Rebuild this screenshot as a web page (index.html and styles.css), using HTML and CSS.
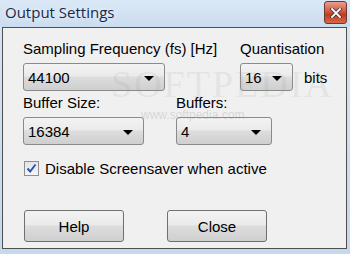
FILE: index.html
```html
<!DOCTYPE html>
<html>
  <head>
    <meta charset="UTF-8">
    <title>Output Settings</title>
    <link rel="stylesheet" href="styles.css">
  </head>
  <body>
    <div class="window">
      <div class="titlebar">
        <span class="title">Output Settings</span>
        <span class="close-btn">
          <svg width="12" height="10" viewBox="0 0 12 10">
            <path d="M2 1 L10 9 M10 1 L2 9" stroke="#3a3a3a" stroke-width="3.4" stroke-linecap="square"/>
            <path d="M2 1 L10 9 M10 1 L2 9" stroke="#ffffff" stroke-width="1.8" stroke-linecap="square"/>
          </svg>
        </span>
      </div>

      <div class="client">
        <div class="row row-top">
          <div class="group group-freq">
            <div class="label">Sampling Frequency (fs) [Hz]</div>
            <div class="combo combo-freq"><span>44100</span><span class="arrow"></span></div>
          </div>
          <div class="group group-quant">
            <div class="label">Quantisation</div>
            <div class="inline">
              <div class="combo combo-quant"><span>16</span><span class="arrow"></span></div>
              <span class="unit">bits</span>
            </div>
          </div>
        </div>

        <div class="row row-buffers">
          <div class="group group-size">
            <div class="label">Buffer Size:</div>
            <div class="combo combo-size"><span>16384</span><span class="arrow"></span></div>
          </div>
          <div class="group">
            <div class="label">Buffers:</div>
            <div class="combo combo-count"><span>4</span><span class="arrow"></span></div>
          </div>
        </div>

        <label class="check-row">
          <span class="checkbox">
            <svg width="11" height="11" viewBox="0 0 11 11">
              <path d="M1.5 5.5 L4.2 8.5 L9.5 1.5" fill="none" stroke="#2a4fb8" stroke-width="1.9"/>
            </svg>
          </span>
          <span>Disable Screensaver when active</span>
        </label>

        <div class="buttons">
          <button class="btn">Help</button>
          <button class="btn">Close</button>
        </div>

        <div class="watermark">SOFTPEDIA</div>
        <div class="watermark-url">www.softpedia.com</div>
      </div>
    </div>
  </body>
</html>
```

FILE: styles.css
```css
body {
  margin: 0;
  font-family: "Liberation Sans", Arial, sans-serif;
}

.window {
  width: 350px;
  height: 254px;
  background: linear-gradient(to bottom, #d6e5f4, #c5d8ec);
  display: flex;
  flex-direction: column;
  overflow: hidden;
}

.titlebar {
  height: 27px;
  display: flex;
  align-items: flex-start;
  justify-content: space-between;
  background: linear-gradient(to bottom, #dae8f6, #cadcef);
}

.title {
  font-family: "Open Sans", "Liberation Sans", sans-serif;
  font-size: 15px;
  color: #16294a;
  margin: 2px 0 0 5px;
  text-shadow: 0 0 6px #ffffff;
}

.close-btn {
  width: 21px;
  height: 21px;
  margin: 1px 3px 0 0;
  border: 1px solid #6b3a30;
  border-radius: 3px;
  background: linear-gradient(to bottom, #e8a08e, #d4573c 45%, #c3391e 60%, #d56a4a);
  display: flex;
  align-items: center;
  justify-content: center;
}

.client {
  position: relative;
  height: 222px;
  margin: 0 3px 0 2px;
  border: 1px solid #4f4f4f;
  background: #f0f0f0;
  padding: 13px 0 0 20px;
  box-sizing: border-box;
  font-size: 15px;
  color: #000;
}

.row {
  display: flex;
}

.group-freq {
  width: 217px;
}

.group-size {
  width: 153px;
}

.label {
  height: 16px;
  line-height: 16px;
  margin-bottom: 6px;
}

.row-buffers {
  margin-top: 4px;
}

.combo {
  border: 1px solid #8a8a8a;
  border-radius: 3px;
  background: linear-gradient(to bottom, #f3f3f3, #ebebeb 45%, #dddddd 50%, #cfcfcf);
  display: flex;
  align-items: center;
  justify-content: space-between;
  padding: 0 10px 0 4px;
  box-sizing: border-box;
  height: 28px;
  font-size: 15px;
}

.combo-freq {
  width: 142px;
}

.combo-quant {
  width: 53px;
}

.combo-size {
  width: 121px;
}

.combo-count {
  width: 96px;
}

.arrow {
  width: 0;
  height: 0;
  border-left: 5px solid transparent;
  border-right: 5px solid transparent;
  border-top: 5px solid #000;
  margin-top: 2px;
}

.inline {
  display: flex;
  align-items: center;
}

.unit {
  margin-left: 11px;
}

.check-row {
  display: flex;
  align-items: center;
  margin-top: 15px;
  font-size: 15px;
}

.checkbox {
  width: 13px;
  height: 13px;
  border: 1px solid #8e8f8f;
  background: linear-gradient(to bottom, #e4e4e4, #f6f6f6);
  display: flex;
  align-items: center;
  justify-content: center;
  margin: 0 6px 0 1px;
}

.buttons {
  display: flex;
  gap: 43px;
  margin-top: 33px;
  margin-left: 1px;
}

.btn {
  width: 100px;
  height: 32px;
  border: 1px solid #707070;
  border-radius: 3px;
  background: linear-gradient(to bottom, #f2f2f2, #ebebeb 45%, #dddddd 50%, #cfcfcf);
  font-family: "Liberation Sans", Arial, sans-serif;
  font-size: 15px;
  color: #000;
  padding: 0;
}

.watermark {
  position: absolute;
  left: 108px;
  top: 34px;
  font-family: "Liberation Serif", serif;
  font-size: 38px;
  letter-spacing: 2px;
  color: rgba(150, 150, 150, 0.15);
  pointer-events: none;
}

.watermark-url {
  position: absolute;
  left: 138px;
  top: 80px;
  font-size: 12px;
  color: rgba(150, 150, 150, 0.3);
  pointer-events: none;
}
```
